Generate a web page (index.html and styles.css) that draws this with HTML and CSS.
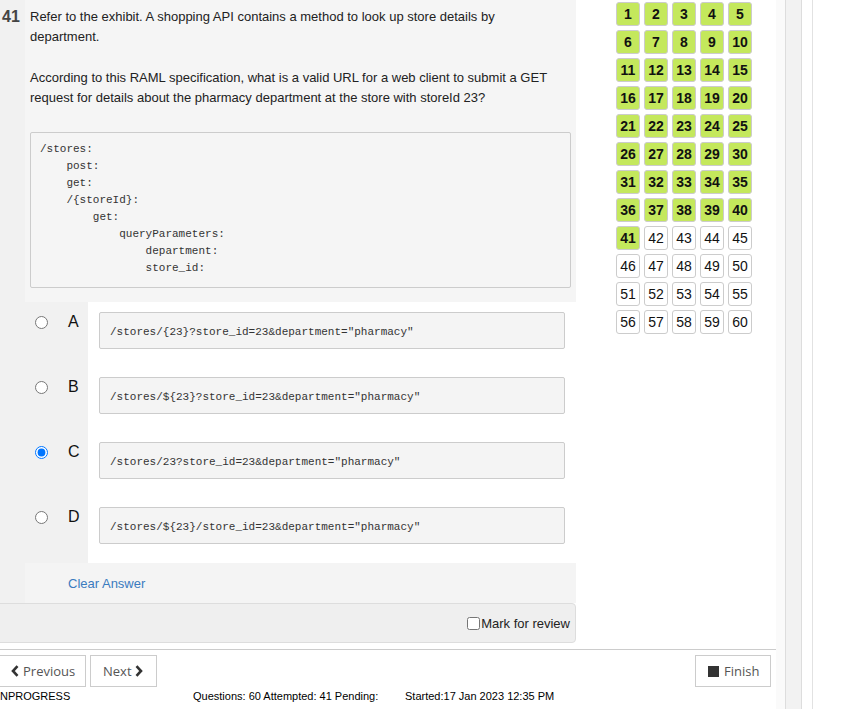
FILE: index.html
```html
<!DOCTYPE html>
<html lang="en">
<head>
<meta charset="utf-8">
<title>Exam - Question 41</title>
<link rel="stylesheet" href="styles.css">
</head>
<body>
<div class="page">
  <div class="main">
    <div class="top">
      <div class="question">
        <div class="q-row">
          <div class="q-num">41</div>
          <div class="q-body">
            <p class="q-text">Refer to the exhibit. A shopping API contains a method to look up store details by department.</p>
            <p class="q-text">According to this RAML specification, what is a valid URL for a web client to submit a GET request for details about the pharmacy department at the store with storeId 23?</p>
            <pre class="exhibit">/stores:
    post:
    get:
    /{storeId}:
        get:
            queryParameters:
                department:
                store_id:</pre>
          </div>
        </div>
        <div class="options">
          <div class="opt">
            <div class="opt-label"><input type="radio" name="ans" class="radio"><span class="letter">A</span></div>
            <div class="opt-answer"><div class="ans-box">/stores/{23}?store_id=23&amp;department="pharmacy"</div></div>
          </div>
          <div class="opt">
            <div class="opt-label"><input type="radio" name="ans" class="radio"><span class="letter">B</span></div>
            <div class="opt-answer"><div class="ans-box">/stores/${23}?store_id=23&amp;department="pharmacy"</div></div>
          </div>
          <div class="opt">
            <div class="opt-label"><input type="radio" name="ans" class="radio" checked><span class="letter">C</span></div>
            <div class="opt-answer"><div class="ans-box">/stores/23?store_id=23&amp;department="pharmacy"</div></div>
          </div>
          <div class="opt opt-last">
            <div class="opt-label"><input type="radio" name="ans" class="radio"><span class="letter">D</span></div>
            <div class="opt-answer"><div class="ans-box">/stores/${23}/store_id=23&amp;department="pharmacy"</div></div>
          </div>
        </div>
        <div class="clear-row">
          <div class="clear-pad"></div>
          <div class="clear-body"><a class="clear-link" href="#">Clear Answer</a></div>
        </div>
        <div class="review-bar">
          <label class="review"><input type="checkbox" class="check">Mark for review</label>
        </div>
      </div>
      <div class="qgrid">
        <span class="tile done">1</span><span class="tile done">2</span><span class="tile done">3</span><span class="tile done">4</span><span class="tile done">5</span>
        <span class="tile done">6</span><span class="tile done">7</span><span class="tile done">8</span><span class="tile done">9</span><span class="tile done">10</span>
        <span class="tile done">11</span><span class="tile done">12</span><span class="tile done">13</span><span class="tile done">14</span><span class="tile done">15</span>
        <span class="tile done">16</span><span class="tile done">17</span><span class="tile done">18</span><span class="tile done">19</span><span class="tile done">20</span>
        <span class="tile done">21</span><span class="tile done">22</span><span class="tile done">23</span><span class="tile done">24</span><span class="tile done">25</span>
        <span class="tile done">26</span><span class="tile done">27</span><span class="tile done">28</span><span class="tile done">29</span><span class="tile done">30</span>
        <span class="tile done">31</span><span class="tile done">32</span><span class="tile done">33</span><span class="tile done">34</span><span class="tile done">35</span>
        <span class="tile done">36</span><span class="tile done">37</span><span class="tile done">38</span><span class="tile done">39</span><span class="tile done">40</span>
        <span class="tile done">41</span><span class="tile">42</span><span class="tile">43</span><span class="tile">44</span><span class="tile">45</span>
        <span class="tile">46</span><span class="tile">47</span><span class="tile">48</span><span class="tile">49</span><span class="tile">50</span>
        <span class="tile">51</span><span class="tile">52</span><span class="tile">53</span><span class="tile">54</span><span class="tile">55</span>
        <span class="tile">56</span><span class="tile">57</span><span class="tile">58</span><span class="tile">59</span><span class="tile">60</span>
      </div>
    </div>
    <div class="footer">
      <div class="btn-row">
        <button class="btn btn-prev"><svg class="chev" width="8" height="12" viewBox="0 0 8 12"><path d="M6.5 1.2 L2 6 L6.5 10.8" fill="none" stroke="currentColor" stroke-width="2.6"/></svg>Previous</button>
        <button class="btn btn-next">Next<svg class="chev chev-r" width="8" height="12" viewBox="0 0 8 12"><path d="M1.5 1.2 L6 6 L1.5 10.8" fill="none" stroke="currentColor" stroke-width="2.6"/></svg></button>
        <span class="spacer"></span>
        <button class="btn btn-finish"><span class="stop"></span>Finish</button>
      </div>
      <div class="status">
        <span class="st-state">NPROGRESS</span>
        <span class="st-count">Questions: 60 Attempted: 41 Pending:</span>
        <span class="st-time">Started:17 Jan 2023 12:35 PM</span>
      </div>
    </div>
  </div>
  <div class="strip">
    <div class="strip-a"></div>
    <div class="strip-b"></div>
    <div class="strip-c"></div>
    <div class="strip-d"></div>
  </div>
</div>
</body>
</html>
```

FILE: styles.css
```css
html, body {
  margin: 0;
  padding: 0;
  height: 100%;
  overflow: hidden;
  background: #fff;
}

body {
  font-family: "Liberation Sans", Arial, sans-serif;
  font-size: 13px;
  color: #222;
}

.page {
  display: flex;
  height: 709px;
}

.main {
  width: 776px;
  flex: none;
  overflow: hidden;
}

.top {
  display: flex;
  align-items: flex-start;
}

/* Question panel */
.question {
  width: 576px;
  flex: none;
}

.q-row {
  display: flex;
}

.q-num {
  width: 23px;
  flex: none;
  background: #f1f1f1;
  padding: 7px 0 0 2px;
  font-size: 16px;
  font-weight: bold;
  line-height: 20px;
  color: #444;
}

.q-body {
  flex: 1;
  background: #f5f5f5;
  padding: 7px 5px 14px 5px;
}

.q-text {
  margin: 0 0 21px 0;
  padding-right: 16px;
  line-height: 20px;
  color: #222;
}

.q-text + .q-text {
  margin-bottom: 24px;
}

.exhibit {
  margin: 0;
  background: #f5f5f5;
  border: 1px solid #ccc;
  border-radius: 2px;
  padding: 8px 9px 10px 9px;
  font-family: "Liberation Mono", Consolas, monospace;
  font-size: 11px;
  line-height: 17px;
  color: #333;
}

/* Options */
.opt {
  display: flex;
  height: 65px;
}

.opt-last {
  height: 66px;
}

.opt-label {
  width: 53px;
  flex: none;
  background: #f1f1f1;
  padding: 10px 0 0 35px;
  display: flex;
  align-items: flex-start;
}

.radio {
  width: 13px;
  height: 13px;
  margin: 4px 0 0 0;
  flex: none;
}

.letter {
  margin-left: 20px;
  font-size: 16px;
  line-height: 20px;
  color: #111;
}

.opt-answer {
  flex: 1;
  background: #fff;
  padding: 10px 11px 0 11px;
}

.ans-box {
  height: 33px;
  background: #f4f4f4;
  border: 1px solid #ccc;
  border-radius: 2px;
  padding: 2px 10px 0 10px;
  display: flex;
  align-items: center;
  font-family: "Liberation Mono", Consolas, monospace;
  font-size: 11px;
  color: #333;
  box-sizing: content-box;
}

/* Clear answer */
.clear-row {
  display: flex;
  height: 40px;
}

.clear-pad {
  width: 25px;
  flex: none;
  background: #f1f1f1;
}

.clear-body {
  flex: 1;
  background: #f4f4f4;
  padding-left: 43px;
  display: flex;
  align-items: center;
}

.clear-link {
  color: #3a7bbf;
  text-decoration: none;
  font-size: 13px;
}

/* Review bar */
.review-bar {
  margin-left: -10px;
  height: 38px;
  background: #efefef;
  border: 1px solid #ddd;
  border-radius: 4px;
  display: flex;
  align-items: center;
  justify-content: flex-end;
  padding-right: 5px;
}

.review {
  display: flex;
  align-items: center;
  font-size: 13px;
  color: #222;
}

.check {
  width: 13px;
  height: 13px;
  margin: 0 1px 0 0;
}

/* Question grid */
.qgrid {
  margin-left: 40px;
  padding-top: 2px;
  display: grid;
  grid-template-columns: repeat(5, 24px);
  grid-auto-rows: 24px;
  gap: 4px;
}

.tile {
  box-sizing: border-box;
  border: 1px solid #ccc;
  border-radius: 3px;
  background: #fff;
  font-size: 14px;
  line-height: 22px;
  text-align: center;
  color: #111;
}

.tile.done {
  background: #c4e85c;
  font-weight: bold;
  color: #111;
}

/* Footer */
.footer {
  margin-top: 6px;
  border-top: 1px solid #ccc;
  padding-top: 5px;
}

.btn-row {
  display: flex;
  align-items: flex-start;
  padding-right: 5px;
}

.spacer {
  flex: 1;
}

.btn {
  height: 32px;
  box-sizing: border-box;
  border: 1px solid #ccc;
  border-radius: 0;
  background: #fff;
  font-family: "Open Sans", "Noto Sans", sans-serif;
  font-size: 13px;
  color: #555;
  display: flex;
  align-items: center;
  padding: 0 12px;
  cursor: pointer;
}

.btn-prev {
  margin-left: -2px;
  width: 88px;
}

.btn-next {
  margin-left: 4px;
  width: 67px;
}

.chev {
  color: #333;
  flex: none;
}

.btn-prev .chev {
  margin-right: 4px;
}

.chev-r {
  margin-left: 3px;
}

.btn-finish {
  width: 76px;
}

.stop {
  width: 11px;
  height: 11px;
  background: #333;
  margin-right: 5px;
  flex: none;
}

.status {
  display: flex;
  padding-top: 3px;
  font-family: "Liberation Sans", Arial, sans-serif;
  font-size: 11px;
  line-height: 13px;
  color: #000;
  white-space: nowrap;
}

.st-state {
  width: 193px;
  flex: none;
}

.st-count {
  width: 212px;
  flex: none;
}

/* Right strip */
.strip {
  display: flex;
  flex: 1;
}

.strip-a {
  width: 9px;
  background: #fafafa;
}

.strip-b {
  width: 15px;
  background: #f2f2f2;
  border-left: 1px solid #ddd;
  border-right: 1px solid #ddd;
}

.strip-c {
  width: 10px;
  background: #fff;
}

.strip-d {
  flex: 1;
  border-left: 1px solid #e2e2e2;
  background: #fff;
}
```
